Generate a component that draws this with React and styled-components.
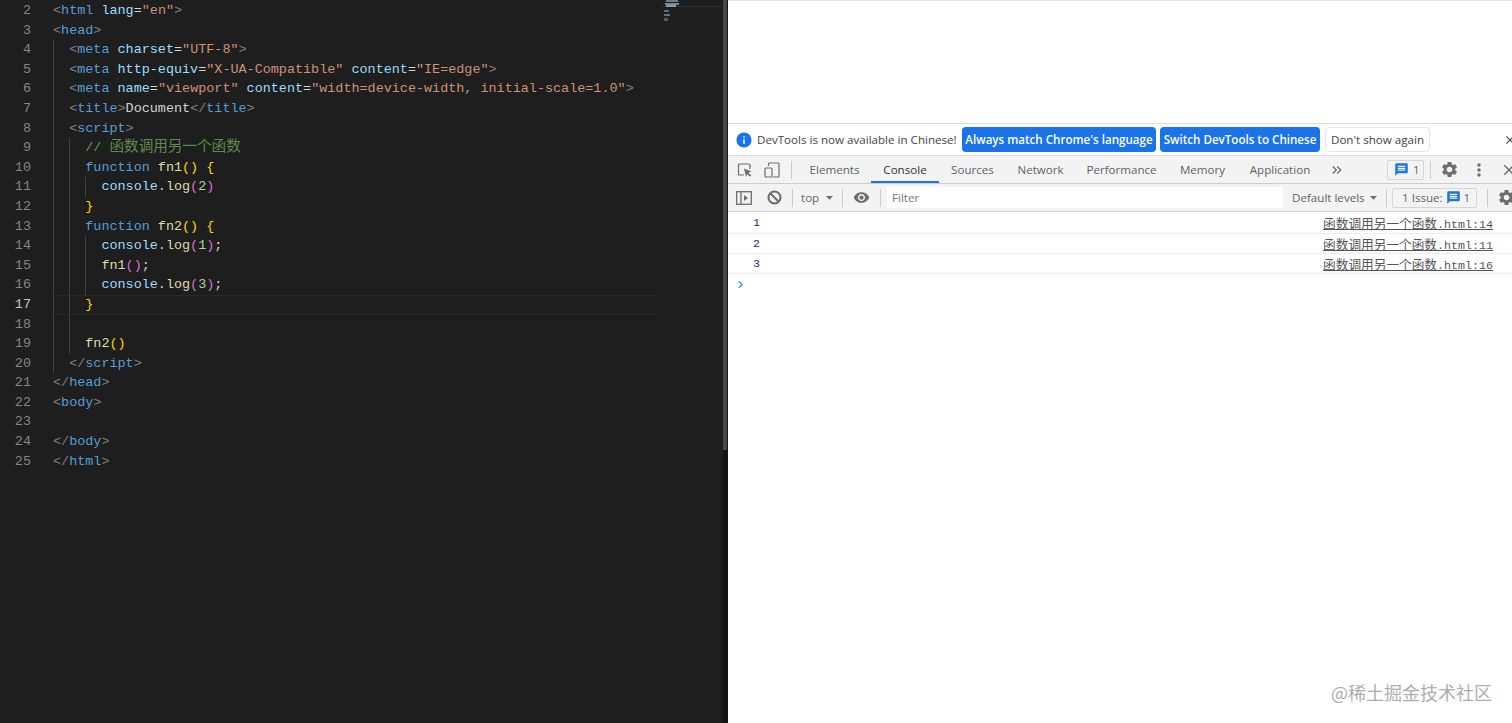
import React from 'react';
import styled, { createGlobalStyle } from 'styled-components';
import { MdInfo, MdMessage, MdSettings, MdVisibility, MdClose, MdMoreVert, MdArrowDropDown, MdKeyboardDoubleArrowRight, MdChevronRight } from 'react-icons/md';

const GlobalStyle = createGlobalStyle`
  html, body { margin: 0; padding: 0; height: 100%; overflow: hidden; background: #fff; }
  #root { height: 100%; }
  svg { flex: none; }
`;

const UI_FONT = `"Open Sans", "Noto Sans", "Liberation Sans", sans-serif`;
const CODE_FONT = `"Liberation Mono", "Noto Sans CJK SC", monospace`;

const tokenColors = {
  punct: '#808080',
  tag: '#569cd6',
  attr: '#9cdcfe',
  str: '#ce9178',
  text: '#d4d4d4',
  comment: '#6a9955',
  fn: '#dcdcaa',
  num: '#b5cea8',
  gold: '#ffd700',
  pink: '#da70d6',
};

const open = (name) => [['punct', '<'], ['tag', name]];
const close = (name) => [['punct', '</'], ['tag', name], ['punct', '>']];
const log = (n, semi) => [
  ['attr', 'console'], ['text', '.'], ['fn', 'log'], ['pink', '('], ['num', n], ['pink', ')'],
  ...(semi ? [['text', ';']] : []),
];

const codeLines = [
  { n: 2, g: 0, t: [...open('html'), ['text', ' '], ['attr', 'lang'], ['text', '='], ['str', '"en"'], ['punct', '>']] },
  { n: 3, g: 0, t: [...open('head'), ['punct', '>']] },
  { n: 4, g: 1, t: [...open('meta'), ['text', ' '], ['attr', 'charset'], ['text', '='], ['str', '"UTF-8"'], ['punct', '>']] },
  { n: 5, g: 1, t: [...open('meta'), ['text', ' '], ['attr', 'http-equiv'], ['text', '='], ['str', '"X-UA-Compatible"'], ['text', ' '], ['attr', 'content'], ['text', '='], ['str', '"IE=edge"'], ['punct', '>']] },
  { n: 6, g: 1, t: [...open('meta'), ['text', ' '], ['attr', 'name'], ['text', '='], ['str', '"viewport"'], ['text', ' '], ['attr', 'content'], ['text', '='], ['str', '"width=device-width, initial-scale=1.0"'], ['punct', '>']] },
  { n: 7, g: 1, t: [...open('title'), ['punct', '>'], ['text', 'Document'], ...close('title')] },
  { n: 8, g: 1, t: [...open('script'), ['punct', '>']] },
  { n: 9, g: 2, t: [['comment', '// '], ['cjk', '函数调用另一个函数']] },
  { n: 10, g: 2, t: [['tag', 'function'], ['text', ' '], ['fn', 'fn1'], ['gold', '()'], ['text', ' '], ['gold', '{']] },
  { n: 11, g: 3, t: log('2') },
  { n: 12, g: 2, t: [['gold', '}']] },
  { n: 13, g: 2, t: [['tag', 'function'], ['text', ' '], ['fn', 'fn2'], ['gold', '()'], ['text', ' '], ['gold', '{']] },
  { n: 14, g: 3, t: log('1', true) },
  { n: 15, g: 3, t: [['fn', 'fn1'], ['pink', '()'], ['text', ';']] },
  { n: 16, g: 3, t: log('3', true) },
  { n: 17, g: 2, active: true, t: [['gold', '}']] },
  { n: 18, g: 2, t: [] },
  { n: 19, g: 2, t: [['fn', 'fn2'], ['gold', '()']] },
  { n: 20, g: 1, t: close('script') },
  { n: 21, g: 0, t: close('head') },
  { n: 22, g: 0, t: [...open('body'), ['punct', '>']] },
  { n: 23, g: 0, t: [] },
  { n: 24, g: 0, t: close('body') },
  { n: 25, g: 0, t: close('html') },
];

const Page = styled.div`
  display: grid;
  grid-template-columns: 723px 5px 784px;
  width: 1512px;
  height: 723px;
  overflow: hidden;
`;

const Editor = styled.div`
  position: relative;
  padding-top: 1px;
  background: #1e1e1e;
  overflow: hidden;
`;

const EditorLine = styled.div`
  display: flex;
  height: 19.6px;
  line-height: 19.6px;
  font-family: ${CODE_FONT};
  font-size: 13.45px;
  white-space: pre;
`;

const LineNumber = styled.div`
  flex: none;
  width: 31px;
  margin-right: 22px;
  text-align: right;
  color: ${(p) => (p.$active ? '#c6c6c6' : '#858585')};
`;

const CodeArea = styled.div`
  display: flex;
  width: 603px;
  box-sizing: border-box;
  border-top: ${(p) => (p.$active ? '1px solid #292929' : 'none')};
  border-bottom: ${(p) => (p.$active ? '1px solid #292929' : 'none')};
  line-height: ${(p) => (p.$active ? '17.6px' : 'inherit')};
`;

const Guide = styled.span`
  flex: none;
  width: 16.14px;
  box-sizing: border-box;
  border-left: 1px solid #404040;
`;

const Token = styled.span`
  color: ${(p) => tokenColors[p.$kind]};
`;

const CjkComment = styled.span`
  color: #5f8a4d;
  font-size: 14.6px;
`;

const Minimap = styled.svg`
  position: absolute;
  top: 0;
  left: 660px;
`;

const Scrollbar = styled.div`
  background: #141414;
`;

const ScrollThumb = styled.div`
  width: 4px;
  height: 450px;
  background: #474747;
`;

const DevtoolsPane = styled.div`
  position: relative;
  display: flex;
  flex-direction: column;
  background: #fff;
  overflow: hidden;
  font-family: ${UI_FONT};
  color: #5a5a5a;
  font-size: 11.6px;
`;

const Viewport = styled.div`
  flex: none;
  height: 123px;
  border-top: 1px solid #e4e4e4;
  box-sizing: border-box;
`;

const InfoBar = styled.div`
  flex: none;
  display: flex;
  align-items: center;
  height: 33px;
  box-sizing: border-box;
  padding-left: 7px;
  border-top: 1px solid #dcdcdc;
  border-bottom: 1px solid #dcdcdc;
  white-space: nowrap;
  color: #444;
`;

const InfoText = styled.span`
  flex: none;
  width: 199px;
  margin: 0 6px 0 4px;
`;

const InfoButton = styled.div`
  flex: none;
  display: flex;
  align-items: center;
  justify-content: center;
  width: ${(p) => p.$width}px;
  height: 25px;
  box-sizing: border-box;
  margin-right: ${(p) => p.$right}px;
  border-radius: 4px;
  font-weight: ${(p) => (p.$primary ? 600 : 400)};
  background: ${(p) => (p.$primary ? '#1a73e8' : '#fff')};
  color: ${(p) => (p.$primary ? '#fff' : '#444')};
  border: ${(p) => (p.$primary ? 'none' : '1px solid #e6e6e6')};
`;

const CloseInfo = styled.div`
  display: flex;
  margin-left: 69px;
  color: #444;
`;

const TabBar = styled.div`
  flex: none;
  display: flex;
  align-items: center;
  height: 28px;
  box-sizing: border-box;
  padding-left: 9px;
  background: #f3f3f3;
  border-bottom: 1px solid #ccc;
  white-space: nowrap;
`;

const IconSlot = styled.div`
  flex: none;
  display: flex;
  align-items: center;
  justify-content: center;
  color: ${(p) => p.$color || '#6e6e6e'};
  margin-left: ${(p) => p.$left || 0}px;
`;

const Divider = styled.div`
  flex: none;
  width: 1px;
  height: 18px;
  margin-left: ${(p) => p.$left || 0}px;
  background: #ccc;
`;

const Tab = styled.div`
  flex: none;
  box-sizing: border-box;
  height: 27px;
  line-height: 27px;
  width: ${(p) => p.$width}px;
  text-align: center;
  color: ${(p) => (p.$active ? '#333' : '#5f6368')};
  border-bottom: ${(p) => (p.$active ? '2px solid #1a73e8' : 'none')};
`;

const Badge = styled.div`
  flex: none;
  display: flex;
  align-items: center;
  gap: ${(p) => p.$gap}px;
  box-sizing: border-box;
  width: ${(p) => p.$width}px;
  height: 20px;
  margin-left: ${(p) => p.$left || 0}px;
  padding-left: ${(p) => p.$pad}px;
  border: 1px solid #d6d6d6;
  border-radius: 2px;
  color: #5f6368;
`;

const ConsoleBar = styled.div`
  flex: none;
  display: flex;
  align-items: center;
  height: 28px;
  box-sizing: border-box;
  padding-left: 8px;
  background: #f3f3f3;
  border-bottom: 1px solid #ccc;
  white-space: nowrap;
`;

const ContextLabel = styled.span`
  flex: none;
  width: 19px;
  margin-left: 8px;
  color: #5f6368;
`;

const FilterInput = styled.div`
  flex: none;
  width: 396px;
  height: 21px;
  line-height: 21px;
  margin-left: 6px;
  padding-left: 5px;
  box-sizing: border-box;
  background: #fff;
  color: #757575;
`;

const LevelsLabel = styled.span`
  flex: none;
  width: 72px;
  margin-left: 9px;
  color: #5f6368;
`;

const LogRow = styled.div`
  flex: none;
  display: flex;
  align-items: center;
  justify-content: space-between;
  height: ${(p) => (p.$first ? 22 : 20)}px;
  box-sizing: border-box;
  padding: 0 19px 0 25px;
  border-bottom: 1px solid #ececec;
`;

const LogValue = styled.span`
  font-family: "Liberation Mono", monospace;
  font-size: 11.67px;
  color: #1c1c9c;
`;

const LogSource = styled.span`
  font-family: "Liberation Mono", "Noto Sans CJK SC", monospace;
  font-size: 11.67px;
  color: #555;
  text-decoration: underline;
`;

const SourceName = styled.span`
  font-size: 12.67px;
`;

const Prompt = styled.div`
  display: flex;
  align-items: center;
  height: 20px;
  padding-left: 5px;
  color: #4285f4;
`;

const Watermark = styled.div`
  position: absolute;
  right: 20px;
  bottom: 20px;
  font-family: "Noto Sans CJK SC", sans-serif;
  font-size: 18px;
  line-height: 22px;
  color: #adadad;
`;

const SelectIcon = () => (
  <svg width="16" height="16" viewBox="0 0 16 16" fill="none">
    <path d="M7 13H2.5A1 1 0 0 1 1.500 12V3a1 1 0 0 1 1-1h9.500a1 1 0 0 1 1 1v4" stroke="#6e6e6e" strokeWidth="1.200" />
    <path d="M7 6.500l7.500 3-3 1.200 2.800 2.800-1.300 1.300-2.800-2.800-1.200 3z" fill="#6e6e6e" />
  </svg>
);

const DeviceIcon = () => (
  <svg width="16" height="16" viewBox="0 0 16 16" fill="none" stroke="#6e6e6e" strokeWidth="1.200">
    <path d="M4.500 4V2a1 1 0 0 1 1-1h8.500a1 1 0 0 1 1 1v12a1 1 0 0 1-1 1H9" />
    <rect x="1" y="6" width="7" height="9" rx="1" />
  </svg>
);

const SidebarIcon = () => (
  <svg width="16" height="16" viewBox="0 0 16 16" fill="none">
    <rect x="0.700" y="1.700" width="14.600" height="12.600" stroke="#6e6e6e" strokeWidth="1.300" />
    <path d="M5 2v12" stroke="#6e6e6e" strokeWidth="1.300" />
    <path d="M8 5l4 3-4 3z" fill="#6e6e6e" />
  </svg>
);

const BlockIcon = () => (
  <svg width="15" height="15" viewBox="0 0 15 15" fill="none" stroke="#6e6e6e" strokeWidth="2">
    <circle cx="7.500" cy="7.500" r="6" />
    <path d="M3.300 3.300l8.400 8.400" />
  </svg>
);

const MinimapArt = () => (
  <Minimap width="63" height="24" viewBox="0 0 63 24">
    <rect x="2" y="6" width="60" height="1" fill="#23373f" />
    <rect x="6" y="0" width="12" height="2" fill="#7c7389" />
    <rect x="5" y="3" width="14" height="2" fill="#63909f" />
    <rect x="6" y="5" width="10" height="2" fill="#9b9b8d" />
    <rect x="4" y="10" width="5" height="2" fill="#52707c" />
    <rect x="4" y="14" width="6" height="2" fill="#5e6f78" />
    <rect x="4" y="18" width="4" height="3" fill="#565b5f" />
  </Minimap>
);

const tabs = [
  ['Elements', 73], ['Console', 68, true], ['Sources', 67], ['Network', 69],
  ['Performance', 93], ['Memory', 69], ['Application', 86],
];

const logs = [
  ['1', '14'],
  ['2', '11'],
  ['3', '16'],
];

const App = () => (
  <Page>
    <GlobalStyle />
    <Editor>
      {codeLines.map((line) => (
        <EditorLine key={line.n}>
          <LineNumber $active={line.active}>{line.n}</LineNumber>
          <CodeArea $active={line.active}>
            {Array.from({ length: line.g }, (_, i) => <Guide key={i} />)}
            {line.t.map(([kind, text], i) => (
              kind === 'cjk'
                ? <CjkComment key={i}>{text}</CjkComment>
                : <Token key={i} $kind={kind}>{text}</Token>
            ))}
          </CodeArea>
        </EditorLine>
      ))}
      <MinimapArt />
    </Editor>
    <Scrollbar><ScrollThumb /></Scrollbar>
    <DevtoolsPane>
      <Viewport />
      <InfoBar>
        <MdInfo size={18} color="#1a73e8" />
        <InfoText>DevTools is now available in Chinese!</InfoText>
        <InfoButton $primary $width={194} $right={4}>Always match Chrome's language</InfoButton>
        <InfoButton $primary $width={160} $right={5}>Switch DevTools to Chinese</InfoButton>
        <InfoButton $width={105} $right={4}>Don't show again</InfoButton>
        <CloseInfo><MdClose size={14} /></CloseInfo>
      </InfoBar>
      <TabBar>
        <IconSlot><SelectIcon /></IconSlot>
        <IconSlot $left={11}><DeviceIcon /></IconSlot>
        <Divider $left={11} />
        <IconSlot $left={6} />
        {tabs.map(([label, width, active]) => (
          <Tab key={label} $width={width} $active={active}>{label}</Tab>
        ))}
        <IconSlot $left={6}><MdKeyboardDoubleArrowRight size={16} /></IconSlot>
        <Badge $width={37} $left={42} $pad={6} $gap={4}>
          <MdMessage size={15} color="#1a73e8" />1
        </Badge>
        <Divider $left={6} />
        <IconSlot $left={9}><MdSettings size={19} /></IconSlot>
        <IconSlot $left={10}><MdMoreVert size={20} /></IconSlot>
        <IconSlot $left={11}><MdClose size={18} /></IconSlot>
      </TabBar>
      <ConsoleBar>
        <IconSlot><SidebarIcon /></IconSlot>
        <IconSlot $left={15}><BlockIcon /></IconSlot>
        <Divider $left={10} />
        <ContextLabel>top</ContextLabel>
        <IconSlot $left={1}><MdArrowDropDown size={17} /></IconSlot>
        <Divider $left={4} />
        <IconSlot $left={10}><MdVisibility size={17} /></IconSlot>
        <Divider $left={10} />
        <FilterInput>Filter</FilterInput>
        <LevelsLabel>Default levels</LevelsLabel>
        <IconSlot $left={1}><MdArrowDropDown size={17} /></IconSlot>
        <Divider $left={4} />
        <Badge $width={85} $left={5} $pad={9} $gap={3}>
          1 Issue: <MdMessage size={15} color="#1a73e8" />1
        </Badge>
        <Divider $left={10} />
        <IconSlot $left={9}><MdSettings size={19} /></IconSlot>
      </ConsoleBar>
      {logs.map(([value, line], i) => (
        <LogRow key={line} $first={i === 0}>
          <LogValue>{value}</LogValue>
          <LogSource><SourceName>函数调用另一个函数</SourceName>.html:{line}</LogSource>
        </LogRow>
      ))}
      <Prompt><MdChevronRight size={15} /></Prompt>
      <Watermark>@稀土掘金技术社区</Watermark>
    </DevtoolsPane>
  </Page>
);

export default App;
